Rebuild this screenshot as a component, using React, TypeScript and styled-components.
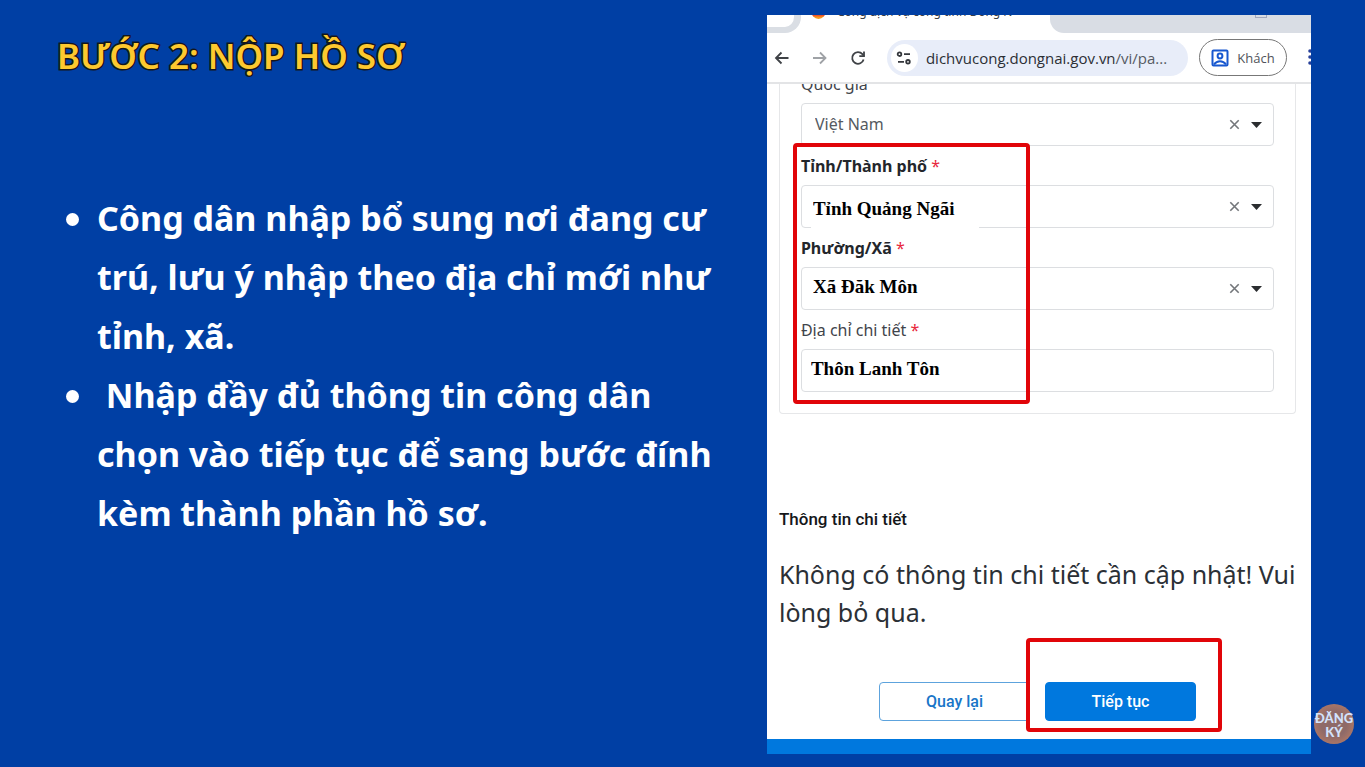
import React from "react";
import styled, { createGlobalStyle } from "styled-components";

const GlobalStyle = createGlobalStyle`
  *, *::before, *::after { box-sizing: border-box; }
  body {
    margin: 0;
    background: #003fa4;
    font-family: "Noto Sans", "Open Sans", sans-serif;
  }
`;

const Page = styled.main`
  position: relative;
  display: grid;
  grid-template-columns: minmax(0, 1fr) 41.5%;
  align-items: start;
  min-height: 100vh;
  padding: 15px 54px 13px 0;
`;

const Lesson = styled.section`
  padding: 17px 24px 0 57px;
`;

const Title = styled.h1`
  margin: 0;
  color: #fdc92f;
  font-size: 35px;
  font-weight: 600;
  line-height: 48px;
  -webkit-text-stroke: 3px #15161a;
  paint-order: stroke fill;
`;

const Steps = styled.ul`
  display: flex;
  flex-direction: column;
  margin: 109px 0 0;
  padding: 0 0 0 9px;
  list-style: none;
  color: #fff;
  font-size: 34px;
  font-weight: 700;
  line-height: 59px;
`;

const Step = styled.li`
  display: flex;
  gap: 18px;
  white-space: pre-wrap;

  &::before {
    content: "";
    flex: none;
    width: 13px;
    height: 13px;
    margin-top: 24px;
    border-radius: 50%;
    background: #fff;
  }
`;

const Panel = styled.section`
  display: flex;
  flex-direction: column;
  overflow: hidden;
  background: #fff;
  border-bottom: 15px solid #0078de;
`;

const TabStrip = styled.div`
  display: flex;
  justify-content: space-between;
  height: 18px;
  overflow: hidden;
`;

const TabSearch = styled.div`
  width: 34px;
  background: #fff;
  border: solid #dadee4;
  border-width: 0 7px 6px 0;
  border-bottom-right-radius: 16px;
`;

const ActiveTab = styled.div`
  display: flex;
  flex: 1;
  gap: 11px;
  padding-left: 10px;
  margin-top: -13px;
  color: #3c4043;
  font-size: 12px;
  line-height: 20px;
  white-space: nowrap;
`;

const SiteIcon = styled.span`
  width: 15px;
  height: 17px;
  border-radius: 50%;
  background: linear-gradient(#e8352b 75%, #f79a1e 90%);
`;

const RestTabs = styled.div`
  display: flex;
  justify-content: flex-end;
  width: 48%;
  padding-right: 44px;
  background: #d9dde4;
  border-bottom-left-radius: 14px;
`;

const WindowMark = styled.span`
  width: 12px;
  height: 3px;
  border: 1px solid #a3a9bd;
  border-top: 0;
`;

const Toolbar = styled.div`
  display: flex;
  align-items: center;
  height: 51px;
  padding: 0 0 0 6px;
  border-bottom: 2px solid #e3e4e6;
`;

const IconButton = styled.button<{ $muted?: boolean }>`
  display: flex;
  flex: none;
  align-items: center;
  justify-content: center;
  width: 18px;
  height: 30px;
  margin-right: 20px;
  padding: 0;
  border: 0;
  background: none;
  color: ${(p) => (p.$muted ? "#9fa2a6" : "#3f4246")};
`;

const Address = styled.div`
  display: flex;
  flex: 1;
  align-items: center;
  gap: 8px;
  min-width: 0;
  height: 36px;
  padding: 0 4px;
  border-radius: 18px;
  background: #e8edf9;
`;

const SiteInfo = styled.span`
  display: flex;
  flex: none;
  align-items: center;
  justify-content: center;
  width: 27px;
  height: 28px;
  border-radius: 50%;
  background: #fff;
`;

const Url = styled.span`
  color: #2c2f35;
  font-family: "Open Sans", "Noto Sans", sans-serif;
  font-size: 15px;
  white-space: nowrap;

  span { color: #565a63; }
`;

const Profile = styled.button`
  display: flex;
  flex: none;
  align-items: center;
  justify-content: center;
  gap: 8px;
  width: 88px;
  height: 37px;
  margin: 0 20px 0 11px;
  padding: 0;
  border: 1px solid #777;
  border-radius: 19px;
  background: #fff;
  color: #50535a;
  font-family: "Open Sans", "Noto Sans", sans-serif;
  font-size: 13px;
`;

const MenuButton = styled.button`
  flex: none;
  width: 4px;
  height: 20px;
  padding: 0;
  border: 0;
  background: none;
  color: #27409a;
  overflow: hidden;
`;

const Content = styled.form`
  display: flex;
  flex-direction: column;
  overflow: hidden;
  padding: 0 15px 18px 12px;
`;

const Card = styled.div`
  position: relative;
  margin-top: -20px;
  padding: 0 21px 21px;
  border: 1px solid #e6e7e9;
  border-top: 0;
  border-radius: 0 0 4px 4px;
`;

const Field = styled.div`
  display: flex;
  flex-direction: column;
`;

const Label = styled.label<{ $strong?: boolean }>`
  height: 39px;
  color: ${(p) => (p.$strong ? "#23262b" : "#3f444b")};
  font-size: 16px;
  font-weight: ${(p) => (p.$strong ? 700 : 400)};
  line-height: 40px;
`;

const Required = styled.span`
  color: #e8283c;
  font-weight: 400;
`;

const Control = styled.div<{ $patched?: boolean }>`
  position: relative;
  display: flex;
  align-items: center;
  height: 43px;
  border: 1px solid #dcdee1;
  border-radius: 4px;

  &::after {
    content: "";
    display: ${(p) => (p.$patched ? "block" : "none")};
    position: absolute;
    left: 9px;
    bottom: -1px;
    width: 168px;
    height: 2px;
    background: #fff;
  }
`;

const controlText = `
  flex: 1;
  min-width: 0;
  height: 41px;
  border: 0;
  outline: 0;
  background: none;
  appearance: none;
`;

const Select = styled.select<{ $typed?: boolean; $low?: boolean }>`
  ${controlText}
  padding: ${(p) =>
    !p.$typed ? "0 0 2px 13px" : p.$low ? "4px 0 0 11px" : "0 0 4px 11px"};
  color: ${(p) => (p.$typed ? "#000" : "#555a61")};
  opacity: 1;
  font: ${(p) =>
    p.$typed
      ? '700 19px "Liberation Serif", serif'
      : '400 16px "Noto Sans", sans-serif'};
`;

const Input = styled.input`
  ${controlText}
  padding: 0 9px 4px;
  color: #000;
  font: 700 19px "Liberation Serif", serif;
`;

const ClearButton = styled.button`
  display: flex;
  margin-right: 11px;
  padding: 0;
  border: 0;
  background: none;
`;

const Caret = styled.svg`
  flex: none;
  margin-right: 11px;
  pointer-events: none;
`;

const Heading = styled.h2`
  margin: 93px 0 0;
  color: #15171a;
  font-family: Roboto, sans-serif;
  font-size: 17px;
  font-weight: 500;
  line-height: 24px;
`;

const Notice = styled.p`
  margin: 24px 0 0;
  color: #2b3036;
  font-size: 25px;
  line-height: 38px;
`;

const Actions = styled.div`
  display: flex;
  justify-content: center;
  gap: 15px;
  margin-top: 51px;
`;

const Action = styled.button<{ $primary?: boolean }>`
  width: 151px;
  height: 39px;
  border: 1px solid ${(p) => (p.$primary ? "#0078de" : "#5da3dd")};
  border-radius: 4px;
  background: ${(p) => (p.$primary ? "#0078de" : "#fff")};
  color: ${(p) => (p.$primary ? "#fff" : "#1976c8")};
  font-family: Roboto, sans-serif;
  font-size: 16px;
  font-weight: 500;
`;

const ActionSpot = styled.div`
  position: relative;
  display: flex;
`;

const Highlight = styled.div<{ $inset: string }>`
  position: absolute;
  inset: ${(p) => p.$inset};
  border: 4px solid #e10509;
  border-radius: 4px;
  pointer-events: none;
`;

const Register = styled.a`
  position: absolute;
  right: 11px;
  bottom: 23px;
  display: flex;
  align-items: center;
  justify-content: center;
  width: 40px;
  height: 40px;
  padding-top: 2px;
  border-radius: 50%;
  background: radial-gradient(#8f6a68 45%, #ad7766 75%);
  color: #d3e2fb;
  font-family: Lato, "Noto Sans", sans-serif;
  font-size: 13px;
  font-weight: 900;
  line-height: 14px;
  text-align: center;
  text-decoration: none;
`;

function ArrowIcon({ flip }: { flip?: boolean }) {
  return (
    <svg width="16" height="16" viewBox="0 0 16 16" fill="none" stroke="currentColor" strokeWidth="1.8">
      <path d={flip ? "M1 8h12.500M8 2.500l5.500 5.500L8 13.500" : "M14.500 8H2M7.500 2.500L2 8l5.500 5.500"} />
    </svg>
  );
}

function ReloadIcon() {
  return (
    <svg width="16" height="16" viewBox="0 0 16 16" fill="none" stroke="currentColor" strokeWidth="1.8">
      <path d="M13.6 9.5A5.800 5.800 0 1 1 12.4 4.200L14 6" />
      <path d="M14 1.500v4.700H9.300" />
    </svg>
  );
}

function TuneIcon() {
  return (
    <svg width="16" height="14" viewBox="0 0 16 14" fill="none" stroke="#34373c" strokeWidth="1.8">
      <circle cx="3.5" cy="3.2" r="1.800" />
      <path d="M8 3.2h6M2 10.8h6" />
      <circle cx="12" cy="10.8" r="1.800" />
    </svg>
  );
}

function GuestIcon() {
  return (
    <svg width="18" height="18" viewBox="0 0 18 18" fill="none" stroke="#1757cf" strokeWidth="2">
      <rect x="1.5" y="1.5" width="15" height="15" rx="1" />
      <circle cx="9" cy="7" r="2.4" />
      <path d="M3 15.5c1.6-2.2 3.6-3.2 6-3.2s4.4 1 6 3.2" />
    </svg>
  );
}

function PickerTools({ name }: { name: string }) {
  return (
    <>
      <ClearButton type="button" aria-label={`Xóa ${name}`}>
        <svg width="11" height="11" viewBox="0 0 11 11" stroke="#73767a" strokeWidth="1.6">
          <path d="M1.3 1.3l8.4 8.4M9.7 1.3L1.3 9.7" />
        </svg>
      </ClearButton>
      <Caret width="11" height="6" viewBox="0 0 11 6" aria-hidden="true">
        <path d="M0 0h11L5.5 6z" fill="#2b2d30" />
      </Caret>
    </>
  );
}

interface PickerProps {
  id: string;
  label: string;
  value: string;
  required?: boolean;
  patched?: boolean;
}

function Picker({ id, label, value, required, patched }: PickerProps) {
  return (
    <Field>
      <Label htmlFor={id} $strong={required}>
        {label} {required && <Required>*</Required>}
      </Label>
      <Control $patched={patched}>
        <Select id={id} $typed={required} $low={patched} defaultValue={value}>
          <option>{value}</option>
        </Select>
        <PickerTools name={label} />
      </Control>
    </Field>
  );
}

export default function App() {
  return (
    <>
      <GlobalStyle />
      <Page>
        <Lesson>
          <Title>BƯỚC 2: NỘP HỒ SƠ</Title>
          <Steps>
            <Step>
              <span>Công dân nhập bổ sung nơi đang cư trú, lưu ý nhập theo địa chỉ mới như tỉnh, xã.</span>
            </Step>
            <Step>
              <span>{" Nhập đầy đủ thông tin công dân chọn vào tiếp tục để sang bước đính kèm thành phần hồ sơ."}</span>
            </Step>
          </Steps>
        </Lesson>

        <Panel>
          <TabStrip>
            <TabSearch />
            <ActiveTab>
              <SiteIcon />
              <span>Cổng dịch vụ công tỉnh Đồng N</span>
            </ActiveTab>
            <RestTabs>
              <WindowMark />
            </RestTabs>
          </TabStrip>
          <Toolbar>
            <IconButton type="button" aria-label="Quay lại trang trước">
              <ArrowIcon />
            </IconButton>
            <IconButton type="button" aria-label="Trang sau" $muted>
              <ArrowIcon flip />
            </IconButton>
            <IconButton type="button" aria-label="Tải lại">
              <ReloadIcon />
            </IconButton>
            <Address>
              <SiteInfo>
                <TuneIcon />
              </SiteInfo>
              <Url>
                dichvucong.dongnai.gov.vn<span>/vi/pa...</span>
              </Url>
            </Address>
            <Profile type="button">
              <GuestIcon />
              Khách
            </Profile>
            <MenuButton type="button" aria-label="Trình đơn">
              <svg width="4" height="18" viewBox="0 0 4 18" fill="currentColor">
                <circle cx="3" cy="3" r="1.8" />
                <circle cx="3" cy="9" r="1.8" />
                <circle cx="3" cy="15" r="1.8" />
              </svg>
            </MenuButton>
          </Toolbar>

          <Content>
            <Card>
              <Picker id="country" label="Quốc gia" value="Việt Nam" />
              <Picker id="province" label="Tỉnh/Thành phố" value="Tỉnh Quảng Ngãi" required patched />
              <Picker id="ward" label="Phường/Xã" value="Xã Đăk Môn" required />
              <Field>
                <Label htmlFor="address">
                  Địa chỉ chi tiết <Required>*</Required>
                </Label>
                <Control>
                  <Input id="address" defaultValue="Thôn Lanh Tôn" />
                </Control>
              </Field>
              <Highlight $inset="79px 265px 9px 13px" />
            </Card>

            <Heading>Thông tin chi tiết</Heading>
            <Notice>Không có thông tin chi tiết cần cập nhật! Vui lòng bỏ qua.</Notice>
            <Actions>
              <Action type="button">Quay lại</Action>
              <ActionSpot>
                <Action type="button" $primary>
                  Tiếp tục
                </Action>
                <Highlight $inset="-44px -26px -11px -19px" />
              </ActionSpot>
            </Actions>
          </Content>
        </Panel>
        <Register href="#register">
          ĐĂNG
          <br />
          KÝ
        </Register>
      </Page>
    </>
  );
}
